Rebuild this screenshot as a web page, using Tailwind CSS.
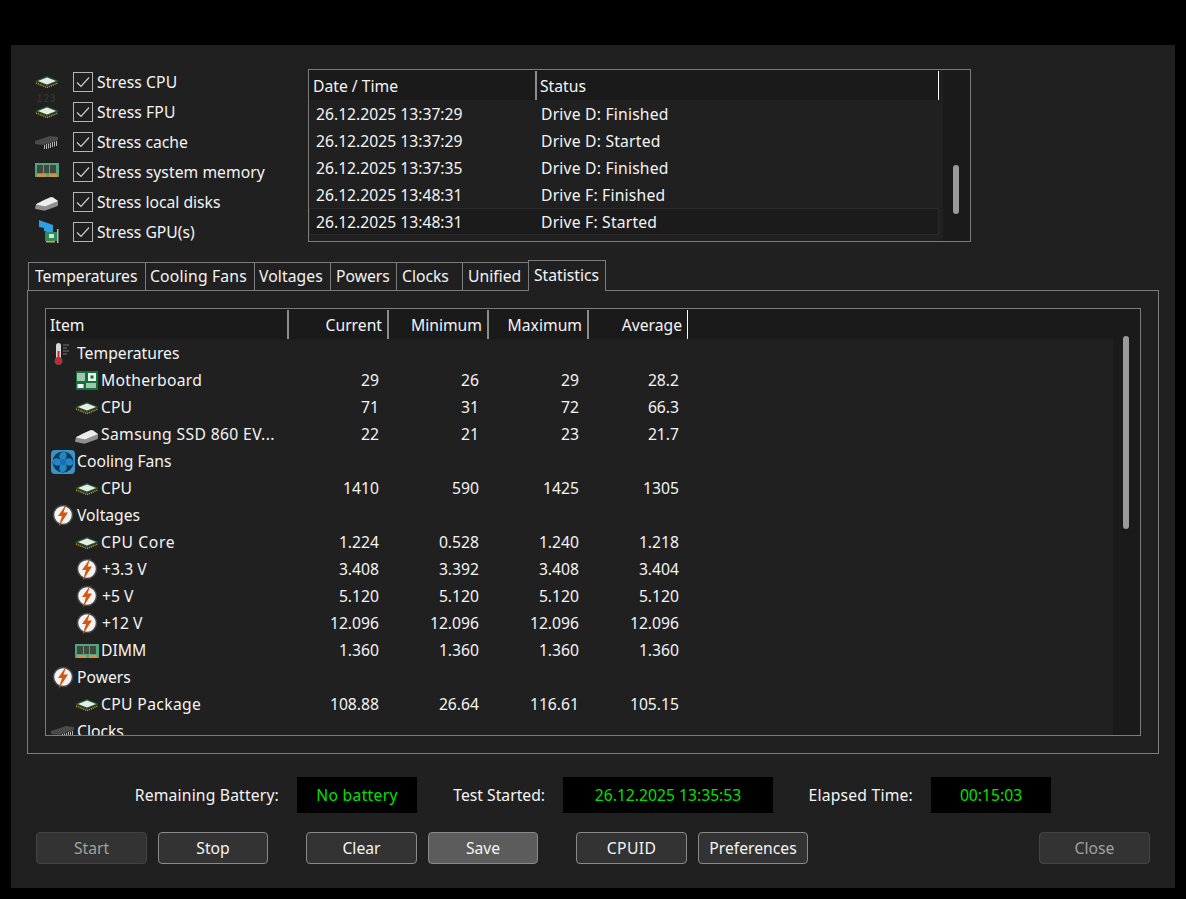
<!DOCTYPE html>
<html lang="en">
<head>
<meta charset="UTF-8">
<title>System Stability Test</title>
<script src="https://cdn.jsdelivr.net/npm/@tailwindcss/browser@4"></script>
</head>
<body class="bg-black h-[899px] overflow-hidden font-['Noto_Sans',sans-serif] text-[15.7px] text-[#f4f4f4]">

<svg class="hidden">
  <symbol id="i-cpu" viewBox="0 0 24 24">
    <polygon points="0,11 12,6 24,11 12,16" fill="#1f5a35"/>
    <polygon points="3,11 12,7.500 21,11 12,14.500" fill="#e9ece6"/>
    <polyline points="1,13 12,17.500 23,13" fill="none" stroke="#d9a520" stroke-width="1.5" stroke-dasharray="1 1"/>
  </symbol>
  <symbol id="i-chip" viewBox="0 0 24 24">
    <polygon points="0,11 15,6 23,7 23,10 8,15 0,14" fill="#4a4a4a"/>
    <path d="M9.500 15v4M11.500 14v5M13.500 13.500v5M15.500 13v5M17.500 12v5M19.500 11.500v5M21.500 11v5" stroke="#b4b4b4" stroke-width="1"/>
  </symbol>
  <symbol id="i-ram" viewBox="0 0 24 24">
    <rect x="0" y="5" width="24" height="14" fill="#54a37f"/>
    <rect x="2" y="7" width="6" height="8" fill="#3e4a3e"/>
    <rect x="9" y="7" width="5" height="8" fill="#3e4a3e"/>
    <rect x="15" y="7" width="6" height="8" fill="#3e4a3e"/>
    <rect x="2" y="16" width="9" height="3" fill="#d6913c"/>
    <rect x="14" y="16" width="8" height="3" fill="#d6913c"/>
  </symbol>
  <symbol id="i-disk" viewBox="0 0 24 24">
    <path d="M1 14.500C1 14 3 13 15 7.500c1-.4 2-.4 3 0l5 3.500v4c0 .6-.5 1-1 1.300l-11 4c-1 .3-2 .3-3 .1l-7-1.400c-.6-.1-1-.5-1-1z" fill="#8f8f8f"/>
    <path d="M1 14.500C1 14 3 13 15 7.500c1-.4 2-.4 3 0l5 3.500-12 5c-1 .3-2 .3-3 .1z" fill="#ececec"/>
  </symbol>
  <symbol id="i-board" viewBox="0 0 24 24">
    <rect x="1" y="2" width="22" height="19" fill="#17703a"/>
    <path d="M3 4v8M5 4v8M7 4v8M9 4v8" stroke="#fff" stroke-width="1.200"/>
    <rect x="13" y="4" width="8" height="8" fill="#e9f3ec"/>
    <rect x="15.500" y="6.500" width="3" height="3" fill="#17703a"/>
    <rect x="2.500" y="15" width="6" height="4" fill="#fff"/>
    <rect x="11" y="14" width="10" height="5" fill="#9dc9ab"/>
  </symbol>
  <symbol id="i-therm" viewBox="0 0 24 24">
    <rect x="5" y="1" width="5" height="18" rx="2.500" fill="#d8d8d8"/>
    <circle cx="7.500" cy="19" r="4" fill="#555"/>
    <circle cx="7.500" cy="19" r="2.700" fill="#d8232a"/>
    <rect x="6.500" y="9" width="2" height="9" fill="#d8232a"/>
    <path d="M12 3h6M12 6h4M12 9h6M12 12h4" stroke="#777" stroke-width="1"/>
  </symbol>
  <symbol id="i-fan" viewBox="0 0 24 24">
    <rect x="0" y="0" width="24" height="24" rx="4" fill="#3a93cc"/>
    <circle cx="12" cy="12" r="10.500" fill="#12384f"/>
    <path d="M12 12C7 9 7 3 12 1.800c5-.3 5 6 0 10.200zM12 12c3-5 9-5 10.200 0 .3 5-6 5-10.200 0zM12 12c5 3 5 9 0 10.200-5 .3-5-6 0-10.200zM12 12c-3 5-9 5-10.200 0-.3-5 6-5 10.200 0z" fill="#1f86c8"/>
    <circle cx="12" cy="12" r="3" fill="#1b6ea8"/>
  </symbol>
  <symbol id="i-volt" viewBox="0 1 24 24">
    <circle cx="12" cy="12" r="9.500" fill="#f4f4f4" stroke="#4a4a4a" stroke-width="1.500"/>
    <polygon points="15.500,1 7,13 11,13 7.500,24 17,9.500 12.500,9.500" fill="#d4570f"/>
  </symbol>
</svg>

<div class="mt-[45px] ml-[11px] w-[1164px] h-[843px] bg-[#202020] flex flex-col">

  <div class="flex items-start pt-[22px] h-[215px]">
    <div class="w-[273px] ml-[24px] flex flex-col">
      <div class="flex items-center h-[30px]">
        <svg class="w-6 h-6"><use href="#i-cpu"/></svg>
        <span class="ml-[14px] w-5 h-5 border border-[#b4b4b4] flex items-center justify-center"><svg class="w-4 h-4" viewBox="0 0 16 16" fill="none" stroke="#d0d0d0" stroke-width="1.2"><path d="M2 8.500l4 4 8-9"/></svg></span>
        <span class="ml-1 pt-[2px] tracking-[0.1px]">Stress CPU</span>
      </div>
      <div class="flex items-center h-[30px]">
        <span class="relative w-6 h-6 block">
          <svg class="w-6 h-6 absolute left-0 top-0"><use href="#i-cpu"/></svg>
          <span class="absolute left-[2px] top-[-9px] text-[10px] text-[#3a3a3a] font-['Liberation_Sans',sans-serif] tracking-[1px]">123</span>
        </span>
        <span class="ml-[14px] w-5 h-5 border border-[#b4b4b4] flex items-center justify-center"><svg class="w-4 h-4" viewBox="0 0 16 16" fill="none" stroke="#d0d0d0" stroke-width="1.2"><path d="M2 8.500l4 4 8-9"/></svg></span>
        <span class="ml-1 pt-[2px] tracking-[0.1px]">Stress FPU</span>
      </div>
      <div class="flex items-center h-[30px]">
        <svg class="w-6 h-6"><use href="#i-chip"/></svg>
        <span class="ml-[14px] w-5 h-5 border border-[#b4b4b4] flex items-center justify-center"><svg class="w-4 h-4" viewBox="0 0 16 16" fill="none" stroke="#d0d0d0" stroke-width="1.2"><path d="M2 8.500l4 4 8-9"/></svg></span>
        <span class="ml-1 pt-[2px]">Stress cache</span>
      </div>
      <div class="flex items-center h-[30px]">
        <svg class="w-6 h-6 -mt-1"><use href="#i-ram"/></svg>
        <span class="ml-[14px] w-5 h-5 border border-[#b4b4b4] flex items-center justify-center"><svg class="w-4 h-4" viewBox="0 0 16 16" fill="none" stroke="#d0d0d0" stroke-width="1.2"><path d="M2 8.500l4 4 8-9"/></svg></span>
        <span class="ml-1 pt-[2px] tracking-[0.05px]">Stress system memory</span>
      </div>
      <div class="flex items-center h-[30px]">
        <svg class="w-6 h-6"><use href="#i-disk"/></svg>
        <span class="ml-[14px] w-5 h-5 border border-[#b4b4b4] flex items-center justify-center"><svg class="w-4 h-4" viewBox="0 0 16 16" fill="none" stroke="#d0d0d0" stroke-width="1.2"><path d="M2 8.500l4 4 8-9"/></svg></span>
        <span class="ml-1 pt-[2px]">Stress local disks</span>
      </div>
      <div class="flex items-center h-[30px]">
        <svg class="w-6 h-6" viewBox="0 0 24 24">
          <polygon points="4,0 18,5 18,14 9,11 9,8 4,7" fill="#2f9fe0"/>
          <rect x="10" y="12" width="13" height="9" fill="#2f8a5a"/>
          <rect x="14" y="14" width="5" height="4" fill="#cfe6d6"/>
          <rect x="22" y="9" width="1.500" height="14" fill="#b8b8b8"/>
          <rect x="11" y="21" width="9" height="1.500" fill="#d6a33c"/>
        </svg>
        <span class="ml-[14px] w-5 h-5 border border-[#b4b4b4] flex items-center justify-center"><svg class="w-4 h-4" viewBox="0 0 16 16" fill="none" stroke="#d0d0d0" stroke-width="1.2"><path d="M2 8.500l4 4 8-9"/></svg></span>
        <span class="ml-1 pt-[2px]">Stress GPU(s)</span>
      </div>
    </div>

    <div class="mt-[2px] w-[663px] h-[173px] border border-[#7c7c7c] flex">
      <div class="w-[634px] flex flex-col">
        <div class="flex h-[30px] bg-[#1a1a1a] pt-[1px] w-[630px] shrink-0">
          <div class="w-[228px] pl-[4px] pt-[2px] border-r-2 border-[#8c8c8c] flex items-center">Date / Time</div>
          <div class="flex-1 pl-[3px] pt-[2px] border-r border-white flex items-center">Status</div>
        </div>
        <div class="flex h-[27px] pt-[2px] items-center"><span class="w-[232px] pl-[7px]">26.12.2025 13:37:29</span><span class="tracking-[0.2px]">Drive D: Finished</span></div>
        <div class="flex h-[27px] pt-[2px] items-center"><span class="w-[232px] pl-[7px]">26.12.2025 13:37:29</span><span class="tracking-[0.2px]">Drive D: Started</span></div>
        <div class="flex h-[27px] pt-[2px] items-center"><span class="w-[232px] pl-[7px]">26.12.2025 13:37:35</span><span class="tracking-[0.2px]">Drive D: Finished</span></div>
        <div class="flex h-[27px] pt-[2px] items-center"><span class="w-[232px] pl-[7px]">26.12.2025 13:48:31</span><span class="tracking-[0.2px]">Drive F: Finished</span></div>
        <div class="flex h-[27px] pt-[3px] items-center w-[630px] bg-[#1b1b1b] border border-[#2a2a2a]"><span class="w-[231px] pl-[6px]">26.12.2025 13:48:31</span><span class="tracking-[0.2px]">Drive F: Started</span></div>
      </div>
      <div class="w-[27px] bg-[#1a1a1a] pt-[95px]">
        <div class="ml-[10px] w-[6px] h-[49px] rounded-full bg-[#9a9a9a]"></div>
      </div>
    </div>
  </div>

  <div class="flex items-end h-[31px] ml-[17px] relative z-10">
    <div class="w-[117px] h-[29px] pt-[1px] pl-[6px] border-l border-t border-b border-[#7c7c7c] flex items-center">Temperatures</div>
    <div class="w-[109px] h-[29px] pt-[1px] pl-[4px] border-l border-t border-b border-[#7c7c7c] flex items-center tracking-[0.2px]">Cooling Fans</div>
    <div class="w-[76px] h-[29px] pt-[1px] pl-[4px] border-l border-t border-b border-[#7c7c7c] flex items-center tracking-[0.1px]">Voltages</div>
    <div class="w-[66px] h-[29px] pt-[1px] pl-[5px] border-l border-t border-b border-[#7c7c7c] flex items-center">Powers</div>
    <div class="w-[66px] h-[29px] pt-[1px] pl-[5px] border-l border-t border-b border-[#7c7c7c] flex items-center">Clocks</div>
    <div class="w-[66px] h-[29px] pt-[1px] pl-[5px] border-l border-t border-b border-[#7c7c7c] flex items-center">Unified</div>
    <div class="w-[78px] h-[31px] pl-[5px] border-l border-r border-t border-[#7c7c7c] bg-[#202020] flex items-center">Statistics</div>
  </div>

  <div class="ml-[16px] -mt-[1px] w-[1132px] h-[464px] border border-[#7c7c7c] pt-[17px] pl-[17px]">
    <div class="w-[1096px] h-[428px] border border-[#7c7c7c] flex overflow-hidden">
      <div class="w-[1067px]">
        <div class="flex h-[30px] bg-[#1a1a1a] pt-[1px]">
          <div class="w-[243px] pl-[4px] pt-[2px] border-r-2 border-[#8c8c8c] flex items-center">Item</div>
          <div class="w-[100px] pr-[5px] pt-[2px] border-r-2 border-[#8c8c8c] flex items-center justify-end">Current</div>
          <div class="w-[100px] pr-[5px] pt-[2px] border-r-2 border-[#8c8c8c] flex items-center justify-end">Minimum</div>
          <div class="w-[100px] pr-[5px] pt-[2px] border-r-2 border-[#8c8c8c] flex items-center justify-end">Maximum</div>
          <div class="w-[99px] pr-[5px] pt-[2px] border-r border-white flex items-center justify-end">Average</div>
        </div>

        <div class="flex h-[27px] pt-[2px] items-center"><div class="w-[242px] flex items-center pl-[5px]"><svg class="w-6 h-6 shrink-0"><use href="#i-therm"/></svg><span class="ml-[2px]">Temperatures</span></div></div>
        <div class="flex h-[27px] pt-[2px] items-center text-right"><div class="w-[242px] flex items-center pl-[29px] text-left"><svg class="w-6 h-6 shrink-0"><use href="#i-board"/></svg><span class="ml-[2px] tracking-[0.27px]">Motherboard</span></div><span class="w-[100px] pr-[9px]">29</span><span class="w-[100px] pr-[9px]">26</span><span class="w-[100px] pr-[9px]">29</span><span class="w-[100px] pr-[9px]">28.2</span></div>
        <div class="flex h-[27px] pt-[2px] items-center text-right"><div class="w-[242px] flex items-center pl-[29px] text-left"><svg class="w-6 h-6 shrink-0"><use href="#i-cpu"/></svg><span class="ml-[2px]">CPU</span></div><span class="w-[100px] pr-[9px]">71</span><span class="w-[100px] pr-[9px]">31</span><span class="w-[100px] pr-[9px]">72</span><span class="w-[100px] pr-[9px]">66.3</span></div>
        <div class="flex h-[27px] pt-[2px] items-center text-right"><div class="w-[242px] flex items-center pl-[29px] text-left"><svg class="w-6 h-6 shrink-0"><use href="#i-disk"/></svg><span class="ml-[2px] tracking-[0.35px]">Samsung SSD 860 EV...</span></div><span class="w-[100px] pr-[9px]">22</span><span class="w-[100px] pr-[9px]">21</span><span class="w-[100px] pr-[9px]">23</span><span class="w-[100px] pr-[9px]">21.7</span></div>
        <div class="flex h-[27px] pt-[2px] items-center"><div class="w-[242px] flex items-center pl-[5px]"><svg class="w-6 h-6 shrink-0"><use href="#i-fan"/></svg><span class="ml-[2px]">Cooling Fans</span></div></div>
        <div class="flex h-[27px] pt-[2px] items-center text-right"><div class="w-[242px] flex items-center pl-[29px] text-left"><svg class="w-6 h-6 shrink-0"><use href="#i-cpu"/></svg><span class="ml-[2px]">CPU</span></div><span class="w-[100px] pr-[9px]">1410</span><span class="w-[100px] pr-[9px]">590</span><span class="w-[100px] pr-[9px]">1425</span><span class="w-[100px] pr-[9px]">1305</span></div>
        <div class="flex h-[27px] pt-[2px] items-center"><div class="w-[242px] flex items-center pl-[5px]"><svg class="w-6 h-6 shrink-0"><use href="#i-volt"/></svg><span class="ml-[2px]">Voltages</span></div></div>
        <div class="flex h-[27px] pt-[2px] items-center text-right"><div class="w-[242px] flex items-center pl-[29px] text-left"><svg class="w-6 h-6 shrink-0"><use href="#i-cpu"/></svg><span class="ml-[2px] tracking-[0.6px]">CPU Core</span></div><span class="w-[100px] pr-[9px]">1.224</span><span class="w-[100px] pr-[9px]">0.528</span><span class="w-[100px] pr-[9px]">1.240</span><span class="w-[100px] pr-[9px]">1.218</span></div>
        <div class="flex h-[27px] pt-[2px] items-center text-right"><div class="w-[242px] flex items-center pl-[29px] text-left"><svg class="w-6 h-6 shrink-0"><use href="#i-volt"/></svg><span class="ml-[3px]">+3.3 V</span></div><span class="w-[100px] pr-[9px]">3.408</span><span class="w-[100px] pr-[9px]">3.392</span><span class="w-[100px] pr-[9px]">3.408</span><span class="w-[100px] pr-[9px]">3.404</span></div>
        <div class="flex h-[27px] pt-[2px] items-center text-right"><div class="w-[242px] flex items-center pl-[29px] text-left"><svg class="w-6 h-6 shrink-0"><use href="#i-volt"/></svg><span class="ml-[3px]">+5 V</span></div><span class="w-[100px] pr-[9px]">5.120</span><span class="w-[100px] pr-[9px]">5.120</span><span class="w-[100px] pr-[9px]">5.120</span><span class="w-[100px] pr-[9px]">5.120</span></div>
        <div class="flex h-[27px] pt-[2px] items-center text-right"><div class="w-[242px] flex items-center pl-[29px] text-left"><svg class="w-6 h-6 shrink-0"><use href="#i-volt"/></svg><span class="ml-[3px]">+12 V</span></div><span class="w-[100px] pr-[9px]">12.096</span><span class="w-[100px] pr-[9px]">12.096</span><span class="w-[100px] pr-[9px]">12.096</span><span class="w-[100px] pr-[9px]">12.096</span></div>
        <div class="flex h-[27px] pt-[2px] items-center text-right"><div class="w-[242px] flex items-center pl-[29px] text-left"><svg class="w-6 h-6 shrink-0"><use href="#i-ram"/></svg><span class="ml-[2px]">DIMM</span></div><span class="w-[100px] pr-[9px]">1.360</span><span class="w-[100px] pr-[9px]">1.360</span><span class="w-[100px] pr-[9px]">1.360</span><span class="w-[100px] pr-[9px]">1.360</span></div>
        <div class="flex h-[27px] pt-[2px] items-center"><div class="w-[242px] flex items-center pl-[5px]"><svg class="w-6 h-6 shrink-0"><use href="#i-volt"/></svg><span class="ml-[2px]">Powers</span></div></div>
        <div class="flex h-[27px] pt-[2px] items-center text-right"><div class="w-[242px] flex items-center pl-[29px] text-left"><svg class="w-6 h-6 shrink-0"><use href="#i-cpu"/></svg><span class="ml-[2px] tracking-[0.35px]">CPU Package</span></div><span class="w-[100px] pr-[9px]">108.88</span><span class="w-[100px] pr-[9px]">26.64</span><span class="w-[100px] pr-[9px]">116.61</span><span class="w-[100px] pr-[9px]">105.15</span></div>
        <div class="flex h-[27px] pt-[2px] items-center"><div class="w-[242px] flex items-center pl-[5px]"><svg class="w-6 h-6 shrink-0"><use href="#i-chip"/></svg><span class="ml-[2px]">Clocks</span></div></div>
      </div>
      <div class="w-[27px] bg-[#1a1a1a] pt-[27px]">
        <div class="ml-[10px] w-[6px] h-[193px] rounded-full bg-[#9a9a9a]"></div>
      </div>
    </div>
  </div>

  <div class="flex items-center mt-[23px] h-[36px]">
    <span class="w-[268px] text-right pt-[2px] tracking-[0.17px]">Remaining Battery:</span>
    <span class="ml-[18px] w-[120px] h-full pt-[2px] bg-black text-[#00e000] flex items-center justify-center tracking-[0.3px]">No battery</span>
    <span class="w-[128px] text-right pt-[2px]">Test Started:</span>
    <span class="ml-[18px] w-[210px] h-full pt-[2px] bg-black text-[#00e000] flex items-center justify-center">26.12.2025 13:35:53</span>
    <span class="w-[140px] text-right pt-[2px] tracking-[0.2px]">Elapsed Time:</span>
    <span class="ml-[18px] w-[120px] h-full pt-[2px] bg-black text-[#00e000] flex items-center justify-center">00:15:03</span>
  </div>

  <div class="flex mt-[19px] px-[25px]">
    <button class="w-[111px] h-8 pt-[2px] rounded-[4px] bg-[#333] border border-[#444] text-[#a0a0a0]">Start</button>
    <button class="ml-[11px] w-[110px] h-8 pt-[2px] rounded-[4px] bg-[#333] border border-[#8a8a8a]">Stop</button>
    <button class="ml-[38px] w-[111px] h-8 pt-[2px] rounded-[4px] bg-[#333] border border-[#8a8a8a]">Clear</button>
    <button class="ml-[11px] w-[110px] h-8 pt-[2px] rounded-[4px] bg-[#5c5c5c] border border-[#8a8a8a]">Save</button>
    <button class="ml-[38px] w-[111px] h-8 pt-[2px] rounded-[4px] bg-[#333] border border-[#8a8a8a] tracking-[0.4px]">CPUID</button>
    <button class="ml-[11px] w-[110px] h-8 pt-[2px] rounded-[4px] bg-[#333] border border-[#8a8a8a]">Preferences</button>
    <button class="ml-auto w-[111px] h-8 pt-[2px] rounded-[4px] bg-[#333] border border-[#444] text-[#a0a0a0]">Close</button>
  </div>
</div>
</body>
</html>
